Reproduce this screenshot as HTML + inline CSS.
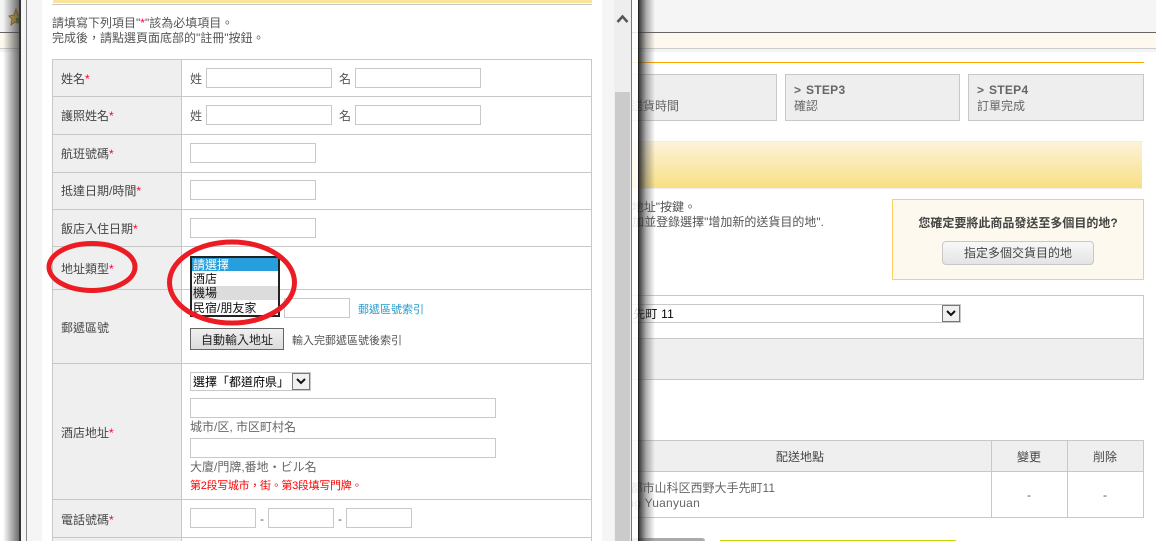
<!DOCTYPE html>
<html><head><meta charset="utf-8"><style>
html,body{margin:0;padding:0;background:#fff}
#r{position:relative;width:1156px;height:541px;overflow:hidden;background:#fff;font-family:"Liberation Sans","Noto Sans CJK TC",sans-serif;font-size:12px;color:#555}
#r div{position:absolute;box-sizing:border-box}
.t{white-space:nowrap;line-height:14px;height:14px}
.i{background:#fff;border:1px solid #c8c8c8}
.h{background:#c8c8c8}
.v{background:#c8c8c8;width:1px}
.l{color:#444}
b{font-weight:bold;word-spacing:1px;letter-spacing:.3px}
span.s{color:#f03}
</style></head><body><div id="r">
<!-- background page -->
<div style="left:0;top:0;width:1156px;height:32px;background:#f5f5f5"></div>
<div style="left:0;top:32px;width:1156px;height:1px;background:#666"></div>
<div style="left:0;top:33px;width:1156px;height:15px;background:#fdf9ee"></div>
<div style="left:0;top:48px;width:1156px;height:1px;background:#ccc"></div>
<div style="left:0;top:49px;width:1156px;height:3px;background:#f3f3f3"></div>
<div style="left:600px;top:62px;width:544px;height:1px;background:#ffa500"></div>
<div style="left:600px;top:74px;width:177px;height:47px;background:#eee;border:1px solid #c8c8c8"></div>
<div class="t" style="right:477px;top:99px;color:#666">指定送貨時間</div>
<div style="left:785px;top:74px;width:175px;height:47px;background:#eee;border:1px solid #c8c8c8"></div>
<div class="t" style="left:794px;top:83px;color:#666"><b>&gt; STEP3</b></div>
<div class="t" style="left:794px;top:99px;color:#666">確認</div>
<div style="left:968px;top:74px;width:176px;height:47px;background:#eee;border:1px solid #c8c8c8"></div>
<div class="t" style="left:977px;top:83px;color:#666"><b>&gt; STEP4</b></div>
<div class="t" style="left:977px;top:99px;color:#666">訂單完成</div>
<div style="left:600px;top:141px;width:544px;height:48px;border-top:1px solid #eee;border-bottom:1px solid #eee;border-right:2px solid #fff;background:linear-gradient(#fdf3d9,#f8df84)"></div>
<div class="t" style="right:460px;top:200px">請點選"新增地址"按鍵。</div>
<div class="t" style="right:332px;top:215px">如需新增請點選增加並登錄選擇"增加新的送貨目的地".</div>
<div style="left:892px;top:199px;width:252px;height:81px;background:#fdf9ee;border:1px solid #fc6"></div>
<div class="t" style="left:918px;top:216px;width:200px;text-align:center;color:#444"><b style="letter-spacing:0;word-spacing:0">您確定要將此商品發送至多個目的地?</b></div>
<div class="t" style="left:942px;top:241px;width:152px;height:24px;line-height:22px;text-align:center;border:1px solid #c8c8c8;border-radius:4px;background:linear-gradient(#f8f8f8,#e4e4e4);color:#444">指定多個交貨目的地</div>
<div style="left:600px;top:295px;width:544px;height:85px;border:1px solid #c8c8c8;border-left:0;background:#fff"></div>
<div style="left:600px;top:338px;width:544px;height:42px;background:#efefef;border-top:1px solid #c8c8c8;border-bottom:1px solid #c8c8c8;border-right:1px solid #c8c8c8"></div>
<div style="left:600px;top:304px;width:361px;height:19px;background:#fff;border:1px solid #c8c8c8"></div>
<div class="t" style="right:482px;top:307px;color:#000;letter-spacing:.2px">西野大手先町 11</div>
<div style="left:942px;top:305px;width:18px;height:17px;background:#f0f0f0;border:1px solid #777"></div>
<svg style="position:absolute;left:945px;top:310px" width="12" height="8"><path d="M2 1L6 5L10 1" fill="none" stroke="#111" stroke-width="2"/></svg>
<div style="left:600px;top:440px;width:544px;height:32px;background:#efefef;border:1px solid #c8c8c8;border-left:0"></div>
<div style="left:600px;top:471px;width:544px;height:47px;background:#fff;border:1px solid #c8c8c8;border-left:0"></div>
<div class="v" style="left:991px;top:440px;height:78px"></div>
<div class="v" style="left:1067px;top:440px;height:78px"></div>
<div class="t l" style="left:776px;top:450px">配送地點</div>
<div class="t l" style="left:1017px;top:450px">變更</div>
<div class="t l" style="left:1093px;top:450px">削除</div>
<div class="t" style="right:381px;top:481px;color:#666">京都市山科区西野大手先町11</div>
<div class="t" style="right:456px;top:496px;color:#666;letter-spacing:.25px">Wang Yuanyuan</div>
<div class="t" style="left:1027px;top:488px">-</div>
<div class="t" style="left:1103px;top:488px">-</div>
<div style="left:600px;top:538px;width:105px;height:3px;background:#aaa;border-radius:3px 3px 0 0"></div>
<div style="left:720px;top:540px;width:236px;height:1px;background:#c8d400"></div>
<!-- star -->
<svg style="position:absolute;left:8px;top:8px" width="15" height="18"><path d="M8 1L10 7L14 8L11 11L12 16L7 14L3 17L4 11L1 8L6 7Z" fill="#e8c050" stroke="#a87a10" stroke-width="1"/><rect x="8" y="10" width="6" height="4" fill="#4a9a30"/></svg>
<!-- dialog shadows -->
<div style="left:3px;top:0;width:16px;height:541px;background:linear-gradient(90deg,rgba(60,60,60,0),rgba(60,60,60,.75))"></div>
<div style="left:639px;top:0;width:16px;height:541px;background:linear-gradient(90deg,rgba(40,40,40,.9),rgba(80,80,80,.45) 45%,rgba(120,120,120,0))"></div>
<!-- dialog frame -->
<div style="left:19px;top:0;width:2px;height:541px;background:#333"></div>
<div style="left:21px;top:0;width:6px;height:541px;background:#f6f6f6;border-right:1px solid #888"></div>
<div style="left:27px;top:0;width:605px;height:541px;background:#f5f5f5"></div>
<div style="left:42px;top:0;width:560px;height:541px;background:#fff"></div>
<div style="left:614px;top:0;width:17px;height:541px;background:#eee"></div>
<div style="left:615px;top:92px;width:15px;height:449px;background:#cbcbcb"></div>
<svg style="position:absolute;left:616px;top:13px" width="13" height="12"><path d="M1.500 9L6.500 3.500L11.500 9" fill="none" stroke="#555" stroke-width="2.500"/></svg>
<div style="left:631px;top:0;width:1px;height:541px;background:#777"></div>
<div style="left:632px;top:0;width:6px;height:541px;background:rgba(255,255,255,.85)"></div>
<div style="left:638px;top:0;width:1px;height:541px;background:#222"></div>
<!-- form header -->
<div style="left:53px;top:0;width:539px;height:3px;background:#fae49a"></div>
<div style="left:52px;top:4px;width:540px;height:1px;background:#c8c8c8"></div>
<div class="t" style="left:52px;top:16px">請填寫下列項目"<span class="s">*</span>"該為必填項目。</div>
<div class="t" style="left:52px;top:31px">完成後，請點選頁面底部的"註冊"按鈕。</div>
<!-- table -->
<div style="left:52px;top:59px;width:130px;height:482px;background:#efefef"></div>
<div class="h" style="left:52px;top:59px;width:540px;height:1px"></div>
<div class="h" style="left:52px;top:96px;width:540px;height:1px"></div>
<div class="h" style="left:52px;top:134px;width:540px;height:1px"></div>
<div class="h" style="left:52px;top:172px;width:540px;height:1px"></div>
<div class="h" style="left:52px;top:209px;width:540px;height:1px"></div>
<div class="h" style="left:52px;top:246px;width:540px;height:1px"></div>
<div class="h" style="left:52px;top:289px;width:540px;height:1px"></div>
<div class="h" style="left:52px;top:363px;width:540px;height:1px"></div>
<div class="h" style="left:52px;top:499px;width:540px;height:1px"></div>
<div class="h" style="left:52px;top:537px;width:540px;height:1px"></div>
<div class="v" style="left:52px;top:59px;height:482px"></div>
<div class="v" style="left:181px;top:59px;height:482px"></div>
<div class="v" style="left:591px;top:59px;height:482px"></div>
<div class="t l" style="left:61px;top:72px">姓名<span class="s">*</span></div>
<div class="t l" style="left:61px;top:109px">護照姓名<span class="s">*</span></div>
<div class="t l" style="left:61px;top:147px">航班號碼<span class="s">*</span></div>
<div class="t l" style="left:61px;top:184px">抵達日期/時間<span class="s">*</span></div>
<div class="t l" style="left:61px;top:222px">飯店入住日期<span class="s">*</span></div>
<div class="t l" style="left:61px;top:262px">地址類型<span class="s">*</span></div>
<div class="t l" style="left:61px;top:321px">郵遞區號</div>
<div class="t l" style="left:61px;top:426px">酒店地址<span class="s">*</span></div>
<div class="t l" style="left:61px;top:513px">電話號碼<span class="s">*</span></div>
<div class="t" style="left:190px;top:72px">姓</div><div class="i" style="left:206px;top:68px;width:126px;height:20px"></div>
<div class="t" style="left:339px;top:72px">名</div><div class="i" style="left:355px;top:68px;width:126px;height:20px"></div>
<div class="t" style="left:190px;top:109px">姓</div><div class="i" style="left:206px;top:105px;width:126px;height:20px"></div>
<div class="t" style="left:339px;top:109px">名</div><div class="i" style="left:355px;top:105px;width:126px;height:20px"></div>
<div class="i" style="left:190px;top:143px;width:126px;height:20px"></div>
<div class="i" style="left:190px;top:180px;width:126px;height:20px"></div>
<div class="i" style="left:190px;top:218px;width:126px;height:20px"></div>
<div class="i" style="left:284px;top:298px;width:66px;height:20px"></div>
<div class="t" style="left:358px;top:303px;color:#2a9bc9;font-size:11px">郵遞區號索引</div>
<!-- listbox -->
<div style="left:190px;top:256px;width:90px;height:61px;background:#fff;border:2px solid #222"></div>
<div class="t" style="left:192px;top:258px;width:86px;height:13px;line-height:14px;background:#269fdc;color:#fff;padding-left:1px">請選擇</div>
<div class="t" style="left:192px;top:272px;width:86px;color:#111;padding-left:1px">酒店</div>
<div class="t" style="left:192px;top:286px;width:86px;background:#dcdcdc;color:#111;padding-left:1px">機場</div>
<div class="t" style="left:192px;top:301px;width:86px;color:#111;padding-left:1px">民宿/朋友家</div>
<div class="t" style="left:190px;top:328px;width:94px;height:22px;line-height:22px;text-align:center;background:linear-gradient(#f0f0f0,#dcdcdc);border:1px solid #666;color:#222">自動輸入地址</div>
<div class="t" style="left:292px;top:334px;font-size:11px">輸入完郵遞區號後索引</div>
<!-- address -->
<div class="i" style="left:190px;top:372px;width:121px;height:19px"></div>
<div class="t" style="left:193px;top:375px;color:#000">選擇「都道府県」</div>
<div style="left:292px;top:373px;width:18px;height:17px;background:#f0f0f0;border:1px solid #777"></div>
<svg style="position:absolute;left:295px;top:378px" width="12" height="8"><path d="M2 1L6 5L10 1" fill="none" stroke="#111" stroke-width="2"/></svg>
<div class="i" style="left:190px;top:398px;width:306px;height:20px"></div>
<div class="t" style="left:190px;top:420px;color:#666">城市/区, 市区町村名</div>
<div class="i" style="left:190px;top:438px;width:306px;height:20px"></div>
<div class="t" style="left:190px;top:460px;color:#666">大廈/門牌,番地・ビル名</div>
<div class="t" style="left:190px;top:479px;color:#f00;font-size:11px;letter-spacing:-.3px">第2段写城市，街。第3段填写門牌。</div>
<div class="i" style="left:190px;top:508px;width:66px;height:20px"></div>
<div class="t" style="left:260px;top:512px">-</div>
<div class="i" style="left:268px;top:508px;width:66px;height:20px"></div>
<div class="t" style="left:338px;top:512px">-</div>
<div class="i" style="left:346px;top:508px;width:66px;height:20px"></div>
<!-- red ellipses -->
<svg style="position:absolute;left:0;top:0" width="400" height="400"><ellipse cx="92" cy="267" rx="43" ry="23.500" fill="none" stroke="#ec1c24" stroke-width="5"/><ellipse cx="232" cy="282.500" rx="62.500" ry="40.500" fill="none" stroke="#ec1c24" stroke-width="5"/></svg>
</div></body></html>
